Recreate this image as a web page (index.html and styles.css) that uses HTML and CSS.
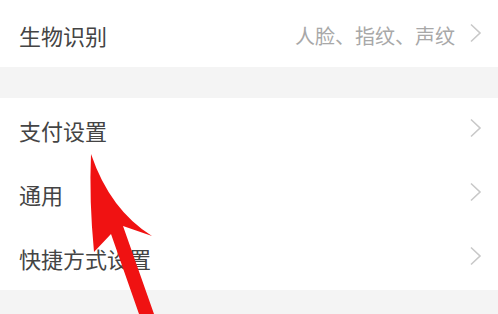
FILE: index.html
```html
<!DOCTYPE html>
<html lang="zh-CN">
<head>
  <meta charset="UTF-8">
  <title>设置</title>
  <link rel="stylesheet" href="styles.css">
</head>
<body>

  <div class="group first">
    <div class="row">
      <span class="label">生物识别</span>
      <span class="value">人脸、指纹、声纹</span>
      <svg class="chevron" viewBox="0 0 12 20"><path d="M1.5 1.5 L10.5 10 L1.5 18.5"/></svg>
    </div>
  </div>

  <div class="group">
    <div class="row">
      <span class="label">支付设置</span>
      <svg class="chevron" viewBox="0 0 12 20"><path d="M1.5 1.5 L10.5 10 L1.5 18.5"/></svg>
    </div>
    <div class="row">
      <span class="label">通用</span>
      <svg class="chevron" viewBox="0 0 12 20"><path d="M1.5 1.5 L10.5 10 L1.5 18.5"/></svg>
    </div>
    <div class="row">
      <span class="label">快捷方式设置</span>
      <svg class="chevron" viewBox="0 0 12 20"><path d="M1.5 1.5 L10.5 10 L1.5 18.5"/></svg>
    </div>
  </div>

  <!-- red pointer drawn over the list -->
  <svg class="arrow" viewBox="0 0 498 314">
    <path d="M91 154 Q110 210 152 236 L123 226 L154 314 L139 314 L111 234 L94 252 Q89 200 91 154 Z"/>
  </svg>

</body>
</html>
```

FILE: styles.css
```css
body {
  margin: 0;
  background: #f4f4f4;
  font-family: "Noto Sans CJK SC", "Noto Sans", sans-serif;
  position: relative;
  height: 314px;
  overflow: hidden;
}
.group {
  background: #fff;
  margin-bottom: 31px;
}
.group.first {
  padding-top: 3px;
}
.row {
  height: 64px;
  display: flex;
  align-items: center;
  padding: 0 16px 0 19px;
}
.label {
  flex: 1;
  font-size: 22px;
  color: #444;
}
.value {
  font-size: 20px;
  color: #a8a8a8;
  margin-right: 14px;
}
.chevron {
  width: 13px;
  height: 20px;
  margin-bottom: 4px;
}
.chevron path {
  fill: none;
  stroke: #c8c8c8;
  stroke-width: 1.6;
}
.arrow {
  position: absolute;
  left: 0;
  top: 0;
  width: 498px;
  height: 314px;
}
.arrow path {
  fill: #f01212;
}
```
